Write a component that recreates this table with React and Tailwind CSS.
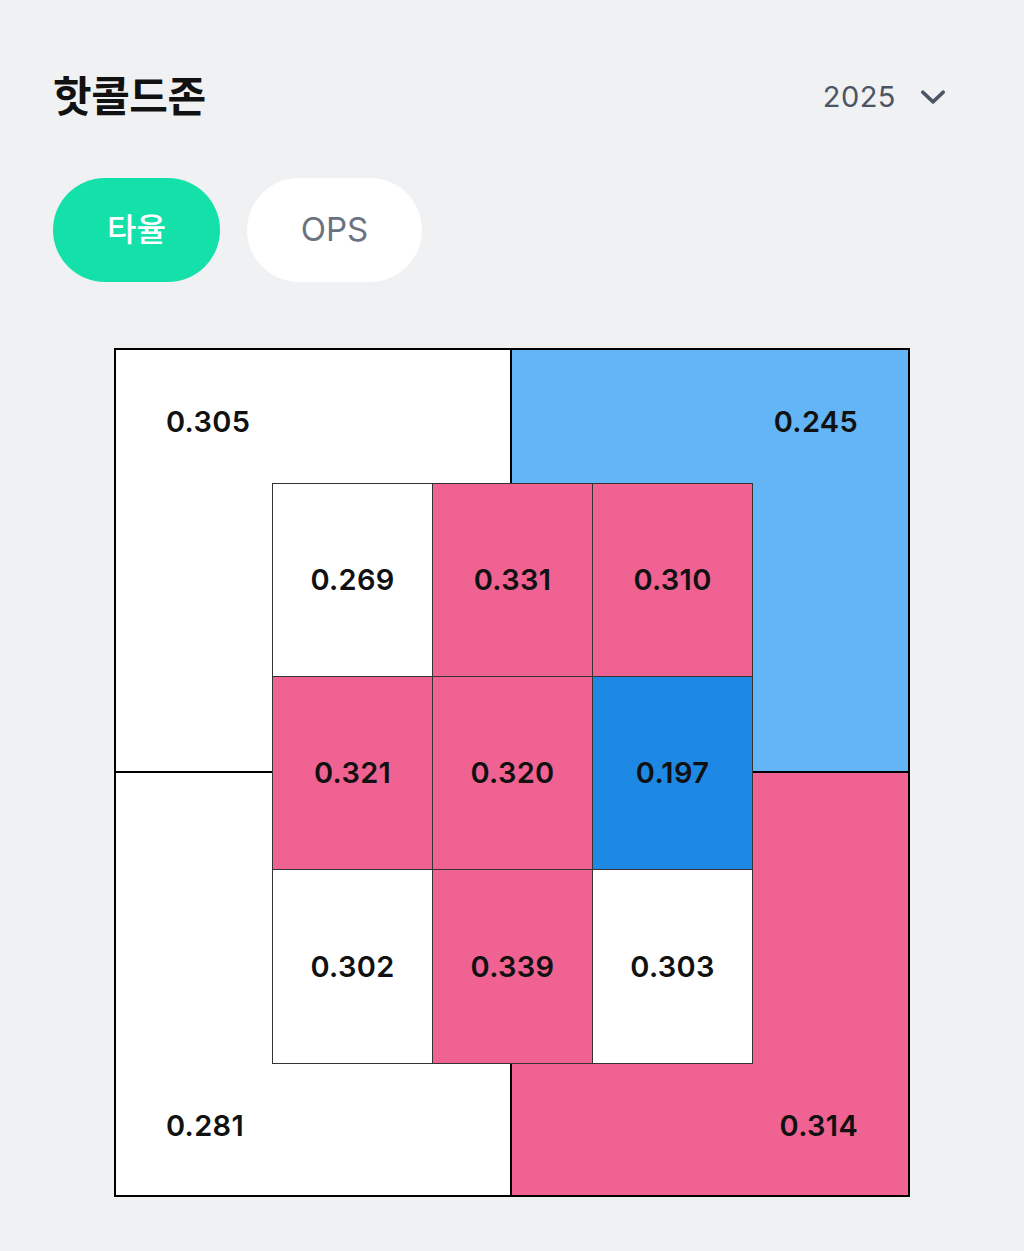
import React, { useState } from 'react';

const FONT = { fontFamily: 'Inter, "Noto Sans CJK KR", sans-serif' };

const outerZones = [
  { value: '0.305', bg: 'bg-white', align: 'items-start justify-start', border: 'border-r-2 border-b-2' },
  { value: '0.245', bg: 'bg-[#64b5f6]', align: 'items-start justify-end', border: 'border-b-2' },
  { value: '0.281', bg: 'bg-white', align: 'items-end justify-start', border: 'border-r-2' },
  { value: '0.314', bg: 'bg-[#f06292]', align: 'items-end justify-end', border: '' },
];

const innerZones = [
  { value: '0.269', bg: 'bg-white' },
  { value: '0.331', bg: 'bg-[#f06292]' },
  { value: '0.310', bg: 'bg-[#f06292]' },
  { value: '0.321', bg: 'bg-[#f06292]' },
  { value: '0.320', bg: 'bg-[#f06292]' },
  { value: '0.197', bg: 'bg-[#1e88e5]' },
  { value: '0.302', bg: 'bg-white' },
  { value: '0.339', bg: 'bg-[#f06292]' },
  { value: '0.303', bg: 'bg-white' },
];

export default function App() {
  const [tab, setTab] = useState('avg');

  return (
    <div className="min-h-[1251px] bg-[#f0f1f3] px-[53px] pt-[71px]" style={FONT}>
      {/* header */}
      <div className="flex items-center justify-between pr-[25px]">
        <h1 className="text-[42px] font-bold leading-[52px] text-[#111] tracking-[-0.5px]">핫콜드존</h1>
        <button className="flex items-center gap-[24px] text-[29px] text-[#4b5563] tracking-[0.5px]">
          2025
          <svg width="26" height="26" viewBox="0 0 24 24" fill="none" stroke="#4b5563" strokeWidth="3.2" strokeLinecap="round" strokeLinejoin="round">
            <path d="M2.5 7.5l9.5 9 9.5-9" />
          </svg>
        </button>
      </div>

      {/* tabs */}
      <div className="mt-[55px] flex gap-[27px]">
        <button
          onClick={() => setTab('avg')}
          className={`h-[104px] w-[167px] rounded-full text-[32px] font-medium ${tab === 'avg' ? 'bg-[#14e0aa] text-white' : 'bg-white text-[#6b7280]'}`}
        >
          타율
        </button>
        <button
          onClick={() => setTab('ops')}
          className={`h-[104px] w-[175px] rounded-full text-[33px] ${tab === 'ops' ? 'bg-[#14e0aa] text-white' : 'bg-white text-[#6b7280]'}`}
        >
          OPS
        </button>
      </div>

      {/* zone chart */}
      <div className="mt-[66px] flex justify-center">
        <div className="relative grid h-[849px] w-[796px] grid-cols-2 grid-rows-2 border-[2.5px] border-black">
          {outerZones.map((z) => (
            <div key={z.value} className={`flex ${z.align} ${z.bg} ${z.border} border-black px-[50px] pt-[55px] pb-[52px]`}>
              <span className="text-[29px] font-semibold leading-[34px] text-[#111] tracking-[0.3px]">{z.value}</span>
            </div>
          ))}

          <div className="absolute left-[156px] top-[133px] grid grid-cols-[160px_160px_160px] grid-rows-[193px_193px_194px] border-l border-t border-[#333]">
            {innerZones.map((z) => (
              <div key={z.value} className={`flex items-center justify-center border-r border-b border-[#333] ${z.bg}`}>
                <span className="text-[29px] font-semibold text-[#111] tracking-[0.3px]">{z.value}</span>
              </div>
            ))}
          </div>
        </div>
      </div>
    </div>
  );
}
